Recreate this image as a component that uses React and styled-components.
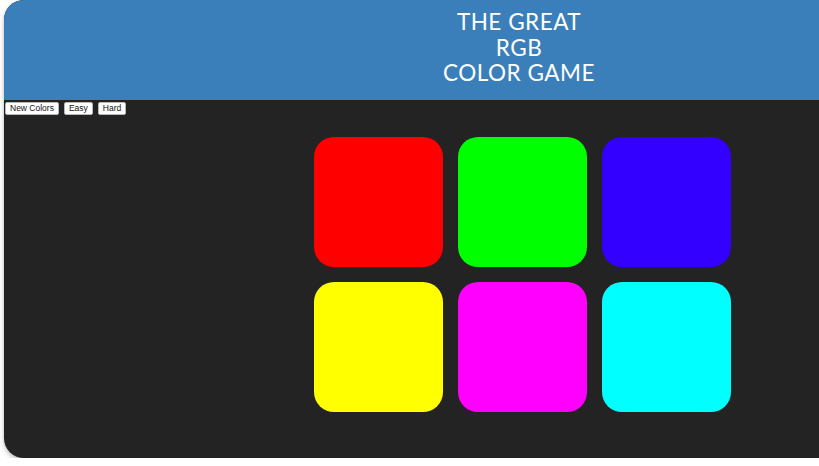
import React from 'react';
import styled, { createGlobalStyle } from 'styled-components';

const GlobalStyle = createGlobalStyle`
  html, body {
    margin: 0;
    padding: 0;
    background: #ffffff;
    overflow: hidden;
  }
`;

const Frame = styled.div`
  width: 1036px;
  height: 458px;
  margin-left: 4px;
  border-radius: 20px;
  overflow: hidden;
  background: #232323;
  box-shadow: 0 3px 5px rgba(0, 0, 0, 0.22), 0 0 2px rgba(0, 0, 0, 0.15);
  font-family: Lato, "Open Sans", sans-serif;
`;

const Header = styled.h1`
  margin: 0;
  height: 100px;
  box-sizing: border-box;
  padding: 9px 6px 0 0;
  background: #3a7fba;
  color: #ffffff;
  text-align: center;
  font-weight: 400;
  font-size: 22.5px;
  line-height: 25.5px;
  letter-spacing: 0.5px;
`;

const Toolbar = styled.div`
  display: flex;
  gap: 5px;
  padding: 2px 0 0 1px;
  height: 13px;
`;

const Button = styled.button`
  margin: 0;
  height: 13px;
  padding: 0 4px;
  background: #ffffff;
  border: 1px solid #b8b8b8;
  border-radius: 2px;
  font-family: "Liberation Sans", Arial, sans-serif;
  font-size: 8.5px;
  line-height: 11px;
  color: #111;
`;

const Board = styled.div`
  width: 430px;
  margin: 22px auto 0;
  display: grid;
  grid-template-columns: repeat(3, 129px);
  grid-auto-rows: 130px;
  column-gap: 15px;
  row-gap: 15px;
  justify-content: center;
`;

const Square = styled.div`
  background: ${(p) => p.$color};
  border-radius: 20px;
`;

const colors = ['#ff0000', '#00ff00', '#3300ff', '#ffff00', '#ff00ff', '#00ffff'];

export default function App() {
  return (
    <>
      <GlobalStyle />
      <Frame>
        <Header>
          THE GREAT
          <br />
          RGB
          <br />
          COLOR GAME
        </Header>
        <Toolbar>
          <Button>New Colors</Button>
          <Button>Easy</Button>
          <Button>Hard</Button>
        </Toolbar>
        <Board>
          {colors.map((c) => (
            <Square key={c} $color={c} />
          ))}
        </Board>
      </Frame>
    </>
  );
}
